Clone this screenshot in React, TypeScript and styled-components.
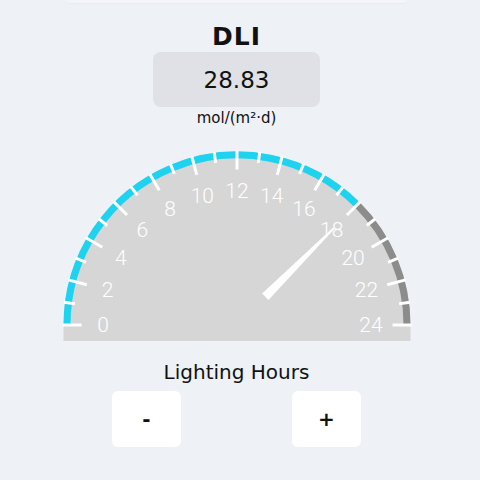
import React from "react";
import styled, { createGlobalStyle } from "styled-components";

const GlobalStyle = createGlobalStyle`
  html, body {
    margin: 0;
    padding: 0;
    background: #eef1f6;
  }
  body {
    font-family: "DejaVu Sans", "Liberation Sans", sans-serif;
    color: #111;
  }
`;

const Page = styled.div`
  box-sizing: border-box;
  width: 480px;
  height: 480px;
  padding-right: 7px;
  display: flex;
  flex-direction: column;
  align-items: center;
  overflow: hidden;
`;

const TopCard = styled.div`
  width: 340px;
  height: 3px;
  background: #f4f5f8;
  border-radius: 0 0 14px 14px;
  box-shadow: 0 1px 2px rgba(0, 0, 0, 0.03);
`;

const Title = styled.div`
  margin-top: 20px;
  height: 28px;
  line-height: 28px;
  font-size: 25px;
  font-weight: bold;
  letter-spacing: 1px;
`;

const ValueBox = styled.div`
  margin-top: 1px;
  width: 167px;
  height: 55px;
  border-radius: 8px;
  background: #dfe1e6;
  display: flex;
  align-items: center;
  justify-content: center;
  font-size: 23px;
  font-weight: 500;
`;

const Unit = styled.div`
  margin-top: 1px;
  height: 20px;
  line-height: 20px;
  font-size: 15px;
`;

const GaugeSvg = styled.svg`
  display: block;
  margin-top: 21px;
`;

const Label = styled.div`
  margin-top: 18px;
  height: 26px;
  line-height: 26px;
  font-size: 20px;
`;

const ButtonRow = styled.div`
  margin-top: 6px;
  display: flex;
  gap: 111px;
`;

const StepButton = styled.button`
  width: 69px;
  height: 56px;
  border: none;
  border-radius: 6px;
  background: #ffffff;
  font-family: "DejaVu Sans", sans-serif;
  font-size: 20px;
  font-weight: bold;
  color: #111;
  padding: 0;
`;

const W = 360;
const H = 192;
const CX = 180;
const CY = 176;
const R_OUT = 173.5;
const ARC_W = 7;
const VALUE = 18;
const MAX = 24;

const polar = (r: number, v: number) => {
  const a = Math.PI - (v / MAX) * Math.PI;
  return { x: CX + r * Math.cos(a), y: CY - r * Math.sin(a) };
};

const arcPath = (r: number, from: number, to: number) => {
  const p1 = polar(r, from);
  const p2 = polar(r, to);
  return `M ${p1.x} ${p1.y} A ${r} ${r} 0 0 1 ${p2.x} ${p2.y}`;
};

const Gauge: React.FC<{ value: number }> = ({ value }) => {
  const rArc = R_OUT - ARC_W / 2;
  const ticks = Array.from({ length: MAX + 1 }, (_, i) => i);
  const labels = ticks.filter((i) => i % 2 === 0);

  const a = Math.PI - (value / MAX) * Math.PI;
  const ux = Math.cos(a);
  const uy = -Math.sin(a);
  const px = -uy;
  const py = ux;
  const base = 40;
  const tip = 137;
  const needle = [
    [CX + ux * base + px * 4.5, CY + uy * base + py * 4.5],
    [CX + ux * tip + px * 1, CY + uy * tip + py * 1],
    [CX + ux * tip - px * 1, CY + uy * tip - py * 1],
    [CX + ux * base - px * 4.5, CY + uy * base - py * 4.5],
  ]
    .map((p) => p.join(","))
    .join(" ");

  return (
    <GaugeSvg width={W} height={H} viewBox={`0 0 ${W} ${H}`}>
      <path
        d={`M ${CX - R_OUT} ${CY} A ${R_OUT} ${R_OUT} 0 0 1 ${CX + R_OUT} ${CY} L ${CX + R_OUT} ${CY + 16} L ${CX - R_OUT} ${CY + 16} Z`}
        fill="#d6d6d6"
      />
      <path d={arcPath(rArc, 0, value)} stroke="#1dd3ef" strokeWidth={ARC_W} fill="none" />
      <path d={arcPath(rArc, value, MAX)} stroke="#8c8c8c" strokeWidth={ARC_W} fill="none" />
      {ticks.map((i) => {
        const inner = i % 2 === 0 ? R_OUT - 18 : R_OUT - 10;
        const p1 = polar(R_OUT + 1, i);
        const p2 = polar(inner, i);
        return (
          <line key={i} x1={p1.x} y1={p1.y} x2={p2.x} y2={p2.y} stroke="#fff" strokeWidth={3} />
        );
      })}
      {labels.map((i) => {
        const p = polar(134, i);
        return (
          <text
            key={i}
            x={p.x}
            y={p.y}
            fill="#fff"
            fontSize={21}
            fontWeight={300}
            fontFamily="Roboto, 'DejaVu Sans', sans-serif"
            textAnchor="middle"
            dominantBaseline="central"
          >
            {i}
          </text>
        );
      })}
      <polygon points={needle} fill="#fff" />
    </GaugeSvg>
  );
};

export default function App() {
  return (
    <Page>
      <GlobalStyle />
      <TopCard />
      <Title>DLI</Title>
      <ValueBox>28.83</ValueBox>
      <Unit>mol/(m²·d)</Unit>
      <Gauge value={VALUE} />
      <Label>Lighting Hours</Label>
      <ButtonRow>
        <StepButton>-</StepButton>
        <StepButton>+</StepButton>
      </ButtonRow>
    </Page>
  );
}
